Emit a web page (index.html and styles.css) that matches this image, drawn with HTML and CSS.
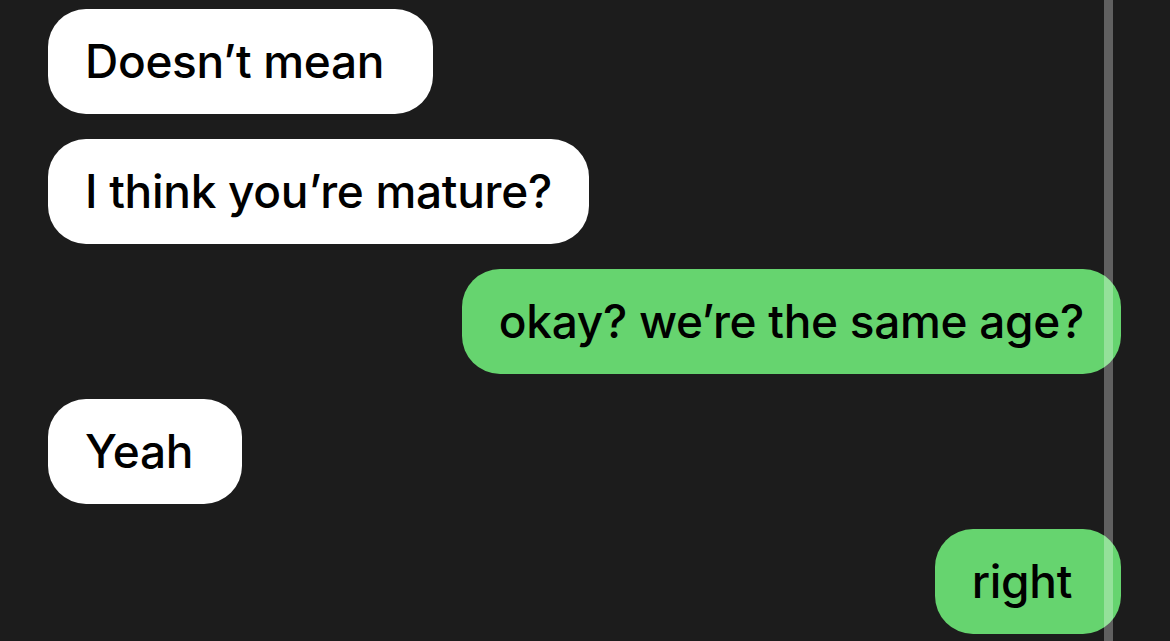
FILE: index.html
```html
<!DOCTYPE html>
<html lang="en">
<head>
<meta charset="utf-8">
<link rel="stylesheet" href="styles.css">
</head>
<body>
<div class="chat">
  <div class="msg in roomy">Doesn’t mean</div>
  <div class="msg in">I think you’re mature?</div>
  <div class="msg out">okay? we’re the same age?</div>
  <div class="msg in roomy">Yeah</div>
  <div class="msg out roomy">right</div>
</div>
<div class="scrollline"></div>
</body>
</html>
```
FILE: styles.css
```css
html, body {
  margin: 0;
  padding: 0;
  background: #1c1c1c;
  height: 100%;
  overflow: hidden;
}
body {
  position: relative;
  font-family: Inter, "Noto Sans", sans-serif;
}
.chat {
  display: flex;
  flex-direction: column;
  gap: 25px;
  padding: 9px 49px 0 48px;
}
.msg {
  font-size: 46px;
  font-weight: 450;
  line-height: 53px;
  padding: 26px 37px;
  border-radius: 38px;
  color: #000;
  letter-spacing: -0.3px;
}
.roomy {
  padding-right: 49px;
}
.in {
  align-self: flex-start;
  background: #ffffff;
}
.out {
  align-self: flex-end;
  background: #66d46f;
}
.scrollline {
  position: absolute;
  top: 0;
  bottom: 0;
  left: 1104px;
  width: 9px;
  background: rgba(255, 255, 255, 0.3);
}
```
